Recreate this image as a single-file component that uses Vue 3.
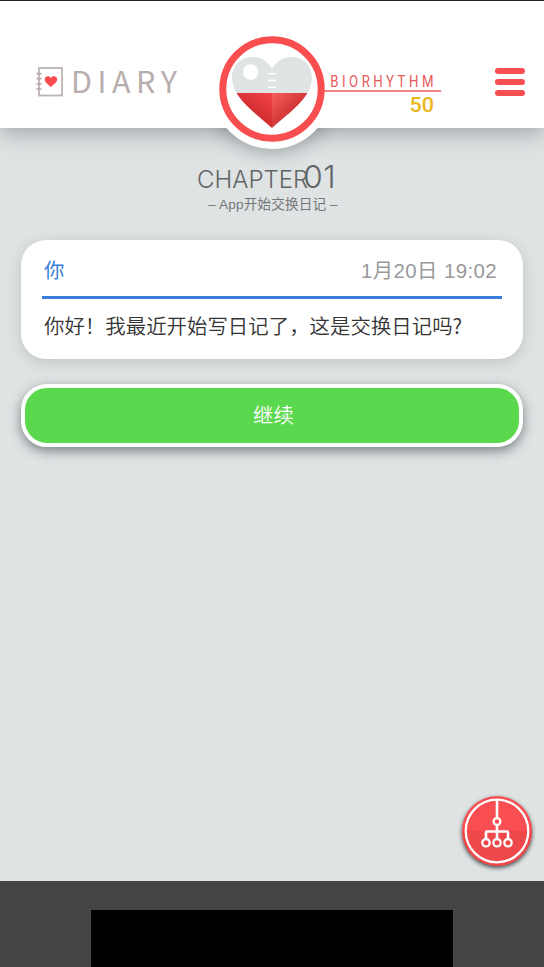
<script setup>
const chapter = { label: 'CHAPTER', number: '01', title: '– App开始交换日记 –' }
const entry = {
  author: '你',
  date: '1月20日 19:02',
  text: '你好！我最近开始写日记了，这是交换日记吗?'
}
const biorhythm = 50
</script>

<template>
  <div class="screen">
    <header class="header">
      <div class="logo">
        <svg class="book" width="27" height="30" viewBox="0 0 27 30">
          <rect x="3" y="1" width="23" height="27.5" fill="#fff" stroke="#bdb3b3" stroke-width="1.8" />
          <path d="M0.5 6.7h5M0.5 11.7h5M0.5 16.8h5M0.5 22h5" stroke="#b4aaaa" stroke-width="1.7" />
          <path d="M14.8 11.2C13.8 8.3 8.7 8.7 8.7 12.4c0 2.8 3.7 5.2 6.1 7.5 2.5-2.3 6.4-4.7 6.4-7.5 0-3.7-5.4-4.1-6.4-1.2z" fill="#fa4b4d" />
        </svg>
        <span class="logo-text">DIARY</span>
      </div>

      <div class="rhythm">
        <svg width="120" height="48" viewBox="0 0 120 48">
          <text class="rhythm-label" transform="scale(.8 1)" x="10.3" y="17" textLength="129" lengthAdjust="spacing">BIORHYTHM</text>
          <path d="M1 21h118" stroke="#f25659" stroke-width="1.6" />
          <text class="rhythm-value" x="87.5" y="41.8" textLength="24.5" lengthAdjust="spacingAndGlyphs">{{ biorhythm }}</text>
        </svg>
      </div>

      <button class="menu" aria-label="menu"><i></i><i></i><i></i></button>

      <div class="heart">
        <svg width="120" height="120" viewBox="0 0 120 120">
          <defs>
            <linearGradient id="leftRed" x1="1" y1="0" x2="0.2" y2="1">
              <stop offset="0" stop-color="#f14446" />
              <stop offset="1" stop-color="#b9191d" />
            </linearGradient>
            <linearGradient id="rightRed" x1="0" y1="0" x2="0.8" y2="0.7">
              <stop offset="0" stop-color="#f6605d" />
              <stop offset="1" stop-color="#bb1a1e" />
            </linearGradient>
            <clipPath id="heartShape">
              <path d="M60 40C55 31 48 28 40 28C29 28 20 36 20 49C20 68 42 83 60 99C78 83 100 68 100 49C100 36 91 28 80 28C72 28 65 31 60 40z" />
            </clipPath>
          </defs>
          <circle cx="60" cy="60" r="49.2" fill="#fff" stroke="#f94e50" stroke-width="7" />
          <g clip-path="url(#heartShape)">
            <path d="M15 20h90v44H15z" fill="#dfe3e4" />
            <path d="M15 64h45v38H15z" fill="url(#leftRed)" />
            <path d="M60 64h45v38H60z" fill="url(#rightRed)" />
          </g>
          <circle cx="38.6" cy="43" r="7.8" fill="#fff" />
          <path d="M56.5 44.7h7M56.5 51.6h7M56.5 58.3h7" stroke="#fff" stroke-width="1.6" stroke-linecap="round" />
        </svg>
      </div>
    </header>

    <main class="content">
      <h1 class="chapter"><span>{{ chapter.label }}</span><span class="num">{{ chapter.number }}</span></h1>
      <p class="subtitle">{{ chapter.title }}</p>

      <article class="card">
        <div class="card-head">
          <span class="author">{{ entry.author }}</span>
          <time>{{ entry.date }}</time>
        </div>
        <p class="message">{{ entry.text }}</p>
      </article>

      <button class="continue">继续</button>

      <button class="tree" aria-label="routes">
        <svg width="70" height="70" viewBox="0 0 70 70" fill="none" stroke="#fff" stroke-width="2.3">
          <path d="M0 35a35 35 0 0 0 70 0z" fill="#ee484b" stroke="none" />
          <circle cx="35" cy="35" r="31.3" />
          <path d="M35 4v18M35 29v14M24 43v-6.5q0-1 1-1h20q1 0 1 1V43" stroke-width="2.6" />
          <circle cx="35" cy="25.5" r="3.4" />
          <circle cx="24" cy="46.7" r="3.7" />
          <circle cx="35" cy="46.7" r="3.7" />
          <circle cx="46" cy="46.7" r="3.7" />
        </svg>
      </button>
    </main>

    <footer class="footer"><div class="ad"></div></footer>
  </div>
</template>

<style>
body {
  margin: 0;
  overflow: hidden;
}
</style>

<style scoped>
.screen {
  display: flex;
  flex-direction: column;
  width: 544px;
  height: 967px;
  overflow: hidden;
  background: #dfe3e4;
  font-family: "Liberation Sans", "Noto Sans CJK SC", sans-serif;
}
button {
  padding: 0;
  border: 0;
  font-family: inherit;
}
.header {
  position: relative;
  z-index: 1;
  display: flex;
  align-items: flex-start;
  box-sizing: border-box;
  height: 128px;
  padding: 0 19px 0 36px;
  border-top: 1px solid #242024;
  background: #fff;
  box-shadow: 0 4px 22px rgba(60, 70, 72, 0.42);
}
.logo {
  display: flex;
  width: 286px;
  padding-top: 66px;
}
.logo-text {
  margin: -2.5px 0 0 8px;
  color: #b8adad;
  font: 400 30.5px/30px "Noto Sans CJK SC", sans-serif;
  letter-spacing: 5.5px;
}
.rhythm {
  position: relative;
  z-index: 1;
  padding-top: 69px;
}
.rhythm svg {
  display: block;
}
.rhythm-label {
  fill: #e8595c;
  font: 400 16.5px Roboto, sans-serif;
}
.rhythm-value {
  fill: #e9b820;
  font: 500 21px Roboto, sans-serif;
}
.menu {
  display: flex;
  flex-direction: column;
  gap: 5px;
  width: 30px;
  margin: 67px 0 0 auto;
  background: none;
}
.menu i {
  height: 6px;
  border-radius: 3px;
  background: #f94f52;
}
.heart {
  position: absolute;
  top: 28px;
  left: 212px;
  width: 120px;
  height: 120px;
  border-radius: 50%;
  background: #fff;
  clip-path: inset(0 -40px -40px);
}
.heart::before {
  content: "";
  position: absolute;
  inset: 0;
  border-radius: 50%;
  box-shadow: 0 4px 18px rgba(60, 70, 72, 0.35);
  clip-path: inset(99px -40px -40px);
}
.heart svg {
  position: relative;
  display: block;
}
.content {
  position: relative;
  flex: 1;
  padding: 34px 21px 0;
}
.chapter {
  display: flex;
  align-items: baseline;
  justify-content: center;
  height: 31px;
  margin: 0;
  padding-right: 11px;
  color: #626566;
  font: 300 24px/29px Inter, "Liberation Sans", sans-serif;
  letter-spacing: 0;
}
.num {
  margin-left: -5px;
  font-size: 31.5px;
  letter-spacing: 0.4px;
}
.subtitle {
  margin: 3px 0 0;
  padding-left: 2px;
  color: #757879;
  font-size: 13.6px;
  line-height: 18px;
  height: 18px;
  letter-spacing: 0.15px;
  text-align: center;
}
.card {
  box-sizing: border-box;
  height: 119px;
  margin-top: 25.5px;
  padding: 10px 21px;
  border-radius: 25px;
  background: #fff;
  box-shadow: 0 3px 14px rgba(60, 70, 72, 0.2);
}
.card-head {
  display: flex;
  justify-content: space-between;
  box-sizing: border-box;
  height: 49px;
  padding: 6px 5px 0 2px;
  border-bottom: 3px solid #397edb;
  font-size: 20.4px;
  line-height: 30px;
}
.author {
  color: #397edb;
}
time {
  color: #999;
  letter-spacing: 0.4px;
}
.message {
  margin: 11px 2px 0;
  color: #333;
  font: 350 20.4px/30px "Noto Sans CJK SC", sans-serif;
  letter-spacing: 0.04px;
  white-space: nowrap;
}
.continue {
  display: block;
  width: 100%;
  height: 63px;
  margin-top: 25.5px;
  padding: 0 0 2px 3px;
  border: 4px solid #fff;
  border-radius: 26px;
  background: #5ad84e;
  box-shadow: 0 4px 12px rgba(50, 55, 58, 0.58);
  color: #fff;
  font: 350 20.4px/53px "Noto Sans CJK SC", sans-serif;
}
.tree {
  position: absolute;
  top: 668px;
  left: 462px;
  width: 70px;
  height: 70px;
  border-radius: 50%;
  background: #f94f52;
  box-shadow: 0 2px 4px rgba(20, 25, 28, 0.75);
}
.tree svg {
  display: block;
  border-radius: 50%;
}
.footer {
  display: flex;
  justify-content: center;
  flex: none;
  box-sizing: border-box;
  height: 86px;
  padding-top: 29px;
  background: #444;
}
.ad {
  width: 362px;
  background: #000;
}
</style>
